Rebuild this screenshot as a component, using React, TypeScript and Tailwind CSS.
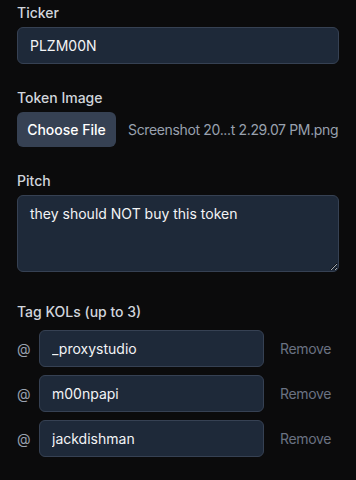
import { useState } from "react";

const font = { fontFamily: "Inter, 'Noto Sans', sans-serif" };

const Label = ({ children }: { children: React.ReactNode }) => (
  <label className="block text-sm leading-5 font-medium text-gray-300 mb-1">
    {children}
  </label>
);

const inputCls =
  "block w-full h-[37px] rounded-md border border-gray-700 bg-gray-800 px-3 text-sm text-gray-100 outline-none";

export default function App() {
  const [ticker, setTicker] = useState("PLZM00N");
  const [pitch, setPitch] = useState("they should NOT buy this token");
  const [kols, setKols] = useState(["_proxystudio", "m00npapi", "jackdishman"]);

  return (
    <div
      className="min-h-screen w-full bg-[#0b0b0c] px-[17px] pt-[3px] pb-6"
      style={font}
    >
      <div>
        <Label>Ticker</Label>
        <input
          className={inputCls}
          value={ticker}
          onChange={(e) => setTicker(e.target.value)}
        />
      </div>

      <div className="mt-6">
        <Label>Token Image</Label>
        <div className="flex items-center">
          <button className="h-[35px] w-[99px] shrink-0 whitespace-nowrap rounded-md bg-gray-700 text-sm font-medium text-white">
            Choose File
          </button>
          <span className="ml-3 text-sm tracking-tight text-gray-400 whitespace-nowrap">
            Screenshot 20...t 2.29.07 PM.png
          </span>
        </div>
      </div>

      <div className="mt-6">
        <Label>Pitch</Label>
        <textarea
          className="block w-full h-[77px] rounded-md border border-gray-700 bg-gray-800 px-3 py-2 text-sm leading-5 text-gray-100 outline-none"
          value={pitch}
          onChange={(e) => setPitch(e.target.value)}
        />
      </div>

      <div className="mt-[30px]">
        <label className="block text-sm leading-5 font-medium text-gray-300 mb-2">
          Tag KOLs (up to 3)
        </label>
        <div className="flex flex-col gap-2">
          {kols.map((k, i) => (
            <div key={i} className="flex items-center">
              <span className="w-[22px] text-sm text-gray-400">@</span>
              <input
                className={inputCls + " flex-1"}
                value={k}
                onChange={(e) =>
                  setKols(kols.map((v, j) => (j === i ? e.target.value : v)))
                }
              />
              <button className="ml-4 pr-2 text-sm tracking-tight text-gray-500">
                Remove
              </button>
            </div>
          ))}
        </div>
      </div>
    </div>
  );
}
